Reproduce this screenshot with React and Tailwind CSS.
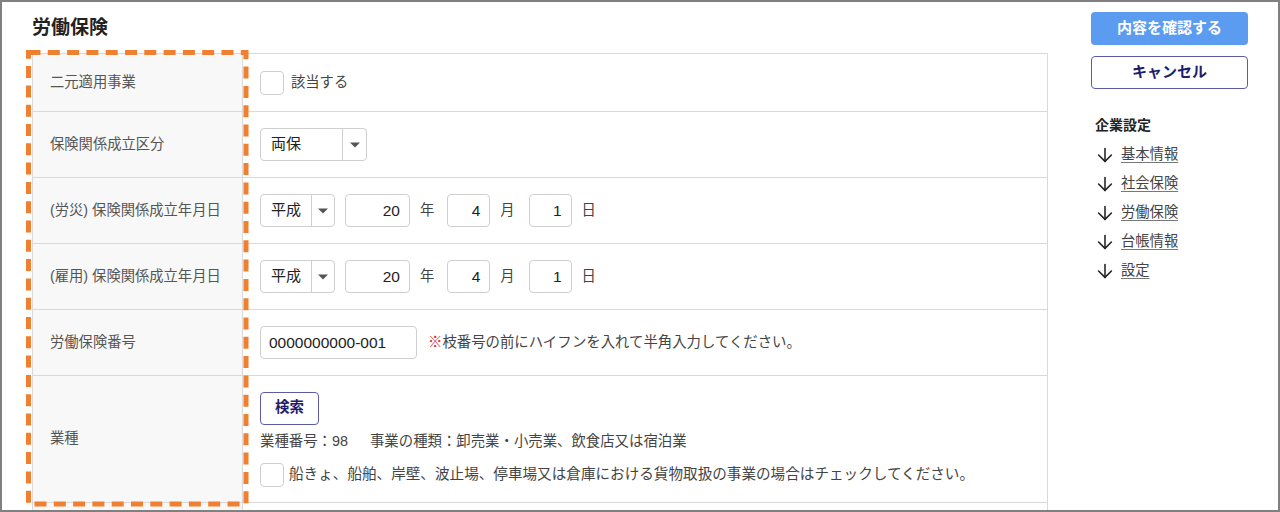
import React from "react";
import { ArrowDown } from "lucide-react";

const FONT = { fontFamily: "'Liberation Sans', 'Noto Sans CJK JP', sans-serif" };

function Caret() {
  return (
    <svg width="10" height="6" viewBox="0 0 10 6" className="block">
      <path d="M0 0.5 L10 0.5 L5 5.5 Z" fill="#555" />
    </svg>
  );
}

function Select({ value, w, tw }) {
  return (
    <div className={`flex h-[33px] ${w} rounded-[4px] border border-[#cfcfcf] bg-white`}>
      <div className={`${tw} flex items-center border-r border-[#cfcfcf] pl-[10px] text-[15px] text-[#222]`}>{value}</div>
      <div className="flex flex-1 items-center justify-center">
        <Caret />
      </div>
    </div>
  );
}

function NumInput({ value, w }) {
  return (
    <div className={`flex h-[33px] ${w} items-center justify-end rounded-[4px] border border-[#cfcfcf] bg-white pr-[9px] text-[15.5px] text-[#222]`}>
      {value}
    </div>
  );
}

function Checkbox() {
  return <div className="h-[24px] w-[24px] shrink-0 rounded-[4px] border border-[#cfcfcf] bg-white" />;
}

function DateRow() {
  return (
    <div className="flex items-center text-[14.3px] text-[#444]">
      <Select value="平成" w="w-[75px]" tw="w-[51px]" />
      <div className="ml-[10px]">
        <NumInput value="20" w="w-[65px]" />
      </div>
      <span className="ml-[10px] mr-[13px]">年</span>
      <NumInput value="4" w="w-[43px]" />
      <span className="ml-[10px] mr-[14px]">月</span>
      <NumInput value="1" w="w-[43px]" />
      <span className="ml-[10px]">日</span>
    </div>
  );
}

function Row({ label, h, children, first }) {
  return (
    <div className={`flex ${h} ${first ? "" : "border-t border-[#d9d9d9]"}`}>
      <div className="flex w-[210px] shrink-0 items-center border-r border-[#d9d9d9] bg-[#f8f8f8] pl-[17px] text-[14.3px] text-[#555]">
        {label}
      </div>
      <div className="flex flex-1 items-center pl-[17px]">{children}</div>
    </div>
  );
}

export default function App() {
  const links = ["基本情報", "社会保険", "労働保険", "台帳情報", "設定"];
  return (
    <div style={FONT} className="flex h-[512px] w-[1280px] overflow-hidden border-2 border-[#808080] bg-white">
      <div className="w-[1046px] shrink-0 pl-[30px] pt-[13px]">
        <h1 className="h-[26px] text-[19px] font-bold leading-[26px] text-[#222]">労働保険</h1>
        <div className="relative mt-[12px] w-[1016px] border-x border-t border-[#d9d9d9]">
          <Row label="二元適用事業" h="h-[57px]" first>
            <div className="flex items-center gap-[7px] text-[14.3px] text-[#444]">
              <Checkbox />
              <span>該当する</span>
            </div>
          </Row>
          <Row label="保険関係成立区分" h="h-[66px]">
            <Select value="両保" w="w-[107px]" tw="w-[82px]" />
          </Row>
          <Row label="(労災) 保険関係成立年月日" h="h-[66px]">
            <DateRow />
          </Row>
          <Row label="(雇用) 保険関係成立年月日" h="h-[66px]">
            <DateRow />
          </Row>
          <Row label="労働保険番号" h="h-[66px]">
            <div className="flex items-center">
              <div className="flex h-[33px] w-[157px] items-center rounded-[4px] border border-[#cfcfcf] bg-white pl-[8px] text-[15.5px] text-[#222]">
                0000000000-001
              </div>
              <span className="ml-[11px] text-[14.4px] text-[#444]">
                <span className="text-[#e0272a]">※</span>枝番号の前にハイフンを入れて半角入力してください。
              </span>
            </div>
          </Row>
          <Row label="業種" h="h-[127px]">
            <div className="flex flex-col items-start">
              <button className="flex h-[33px] w-[59px] items-center justify-center rounded-[4px] border border-[#5b5ba8] bg-white text-[14.5px] font-bold text-[#1d1d6b]">
                検索
              </button>
              <div className="mt-[6px] text-[14.4px] leading-[20px] text-[#444]">
                業種番号：98<span className="inline-block w-[22px]" />事業の種類：卸売業・小売業、飲食店又は宿泊業
              </div>
              <div className="mt-[12px] flex items-center gap-[5px] text-[14.6px] text-[#444]">
                <Checkbox />
                <span>船きょ、船舶、岸壁、波止場、停車場又は倉庫における貨物取扱の事業の場合はチェックしてください。</span>
              </div>
            </div>
          </Row>
          <Row label="" h="h-[40px]">
            <span />
          </Row>
          <svg
            className="pointer-events-none absolute left-[-10px] top-[-10px]"
            width="240"
            height="475"
          >
            <rect
              x="5.5"
              y="8.5"
              width="217.5"
              height="451.5"
              fill="none"
              stroke="#f07f2f"
              strokeWidth="5"
              strokeDasharray="12 7.3"
            />
          </svg>
        </div>
      </div>
      <div className="ml-[43px] w-[157px] shrink-0 pt-[10px]">
        <button className="flex h-[33px] w-full items-center justify-center rounded-[4px] bg-[#5b9cf0] text-[15px] font-bold text-white">
          内容を確認する
        </button>
        <button className="mt-[11px] flex h-[33px] w-full items-center justify-center rounded-[4px] border border-[#5b5ba8] bg-white text-[15px] font-bold text-[#1d1d6b]">
          キャンセル
        </button>
        <div className="mt-[26px] pl-[4px] text-[14px] font-bold leading-[20px] text-[#222]">企業設定</div>
        <div className="mt-[5px] flex flex-col">
          {links.map((l) => (
            <div key={l} className="flex h-[29px] items-center">
              <ArrowDown size={22} strokeWidth={1.7} color="#222" className="ml-[3px]" />
              <span className="ml-[5px] text-[14.3px] text-[#444] underline decoration-[#777] underline-offset-[3px]">{l}</span>
            </div>
          ))}
        </div>
      </div>
    </div>
  );
}
